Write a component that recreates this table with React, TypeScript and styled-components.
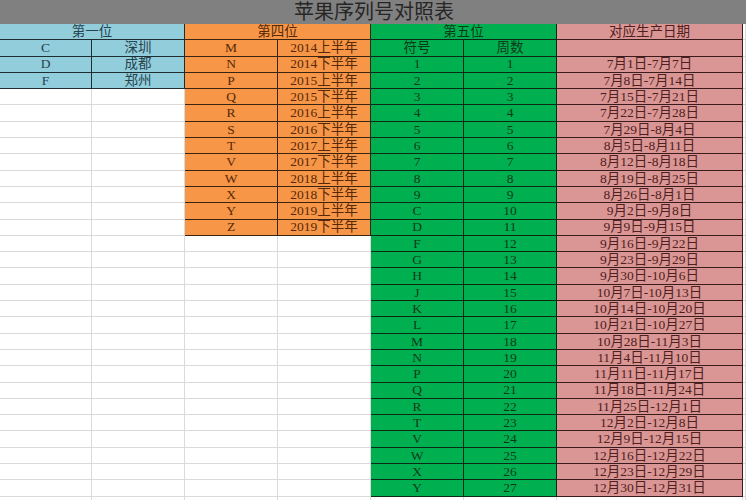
import styled, { createGlobalStyle } from "styled-components";

const GlobalStyle = createGlobalStyle`
  html, body {
    margin: 0;
    padding: 0;
    background: #ffffff;
    overflow: hidden;
  }
  * {
    box-sizing: border-box;
  }
`;

type Tone = "blue" | "orange" | "green" | "pink" | "blank";

const fills: Record<Tone, string> = {
  blue: "#92cddc",
  orange: "#f79646",
  green: "#00b050",
  pink: "#da9694",
  blank: "#ffffff",
};

const inks: Record<Tone, string> = {
  blue: "#27434c",
  orange: "#55290a",
  green: "#0b3a18",
  pink: "#4f2020",
  blank: "#000000",
};

const lines: Record<Tone, string> = {
  blue: "#1f2e33",
  orange: "#3a2412",
  green: "#0c2a14",
  pink: "#3a1c1c",
  blank: "#dadada",
};

const Page = styled.div`
  width: 746px;
  height: 500px;
  overflow: hidden;
  display: flex;
  flex-direction: column;
`;

const TitleBar = styled.div`
  height: 24px;
  flex: none;
  background: #808080;
  display: flex;
  align-items: center;
  justify-content: center;
  padding-left: 2px;
`;

const Title = styled.span`
  font-family: "Liberation Sans", "Noto Sans CJK SC", sans-serif;
  font-size: 20px;
  line-height: 1;
  color: #262626;
`;

const Sheet = styled.div`
  display: grid;
  grid-template-columns: 92px 93px 93px 93px 93px 93px 186px 1fr;
  grid-auto-rows: 16.31px;
`;

const Cell = styled.div<{ $tone: Tone; $span?: number }>`
  grid-column: span ${({ $span }) => $span ?? 1};
  background: ${({ $tone }) => fills[$tone]};
  color: ${({ $tone }) => inks[$tone]};
  border-right: 1px solid ${({ $tone }) => lines[$tone]};
  border-bottom: 1px solid ${({ $tone }) => lines[$tone]};
  display: flex;
  align-items: center;
  justify-content: center;
  font-family: "Liberation Serif", "Noto Sans CJK SC", serif;
  font-size: 13.5px;
  line-height: 1;
  white-space: nowrap;
  overflow: hidden;
`;

type CellData = { text?: string; tone: Tone; span?: number };

const firstPos: [string, string][] = [
  ["C", "深圳"],
  ["D", "成都"],
  ["F", "郑州"],
];

const fourthPos: [string, string][] = [
  ["M", "2014上半年"],
  ["N", "2014下半年"],
  ["P", "2015上半年"],
  ["Q", "2015下半年"],
  ["R", "2016上半年"],
  ["S", "2016下半年"],
  ["T", "2017上半年"],
  ["V", "2017下半年"],
  ["W", "2018上半年"],
  ["X", "2018下半年"],
  ["Y", "2019上半年"],
  ["Z", "2019下半年"],
];

const fifthSymbols = [
  "1", "2", "3", "4", "5", "6", "7", "8", "9", "C", "D", "F", "G", "H",
  "J", "K", "L", "M", "N", "P", "Q", "R", "T", "V", "W", "X", "Y",
];

const dates = [
  "7月1日-7月7日",
  "7月8日-7月14日",
  "7月15日-7月21日",
  "7月22日-7月28日",
  "7月29日-8月4日",
  "8月5日-8月11日",
  "8月12日-8月18日",
  "8月19日-8月25日",
  "8月26日-8月1日",
  "9月2日-9月8日",
  "9月9日-9月15日",
  "9月16日-9月22日",
  "9月23日-9月29日",
  "9月30日-10月6日",
  "10月7日-10月13日",
  "10月14日-10月20日",
  "10月21日-10月27日",
  "10月28日-11月3日",
  "11月4日-11月10日",
  "11月11日-11月17日",
  "11月18日-11月24日",
  "11月25日-12月1日",
  "12月2日-12月8日",
  "12月9日-12月15日",
  "12月16日-12月22日",
  "12月23日-12月29日",
  "12月30日-12月31日",
];

const buildRow = (r: number): CellData[] => {
  const row: CellData[] = [];

  // 第一位
  if (r === 0) row.push({ text: "第一位", tone: "blue", span: 2 });
  else if (firstPos[r - 1]) {
    row.push({ text: firstPos[r - 1][0], tone: "blue" });
    row.push({ text: firstPos[r - 1][1], tone: "blue" });
  } else {
    row.push({ tone: "blank" }, { tone: "blank" });
  }

  // 第四位
  if (r === 0) row.push({ text: "第四位", tone: "orange", span: 2 });
  else if (fourthPos[r - 1]) {
    row.push({ text: fourthPos[r - 1][0], tone: "orange" });
    row.push({ text: fourthPos[r - 1][1], tone: "orange" });
  } else {
    row.push({ tone: "blank" }, { tone: "blank" });
  }

  // 第五位
  if (r === 0) row.push({ text: "第五位", tone: "green", span: 2 });
  else if (r === 1) row.push({ text: "符号", tone: "green" }, { text: "周数", tone: "green" });
  else if (fifthSymbols[r - 2]) {
    row.push({ text: fifthSymbols[r - 2], tone: "green" });
    row.push({ text: String(r - 1), tone: "green" });
  } else {
    row.push({ tone: "blank" }, { tone: "blank" });
  }

  // 对应生产日期
  if (r === 0) row.push({ text: "对应生产日期", tone: "pink" });
  else if (r === 1) row.push({ tone: "pink" });
  else if (dates[r - 2]) row.push({ text: dates[r - 2], tone: "pink" });
  else row.push({ tone: "blank" });

  row.push({ tone: "blank" });
  return row;
};

const rows = Array.from({ length: 30 }, (_, r) => buildRow(r));

const App = () => {
  return (
    <Page>
      <GlobalStyle />
      <TitleBar>
        <Title>苹果序列号对照表</Title>
      </TitleBar>
      <Sheet>
        {rows.map((row, r) =>
          row.map((cell, c) => (
            <Cell key={`${r}-${c}`} $tone={cell.tone} $span={cell.span}>
              {cell.text}
            </Cell>
          ))
        )}
      </Sheet>
    </Page>
  );
};

export default App;
